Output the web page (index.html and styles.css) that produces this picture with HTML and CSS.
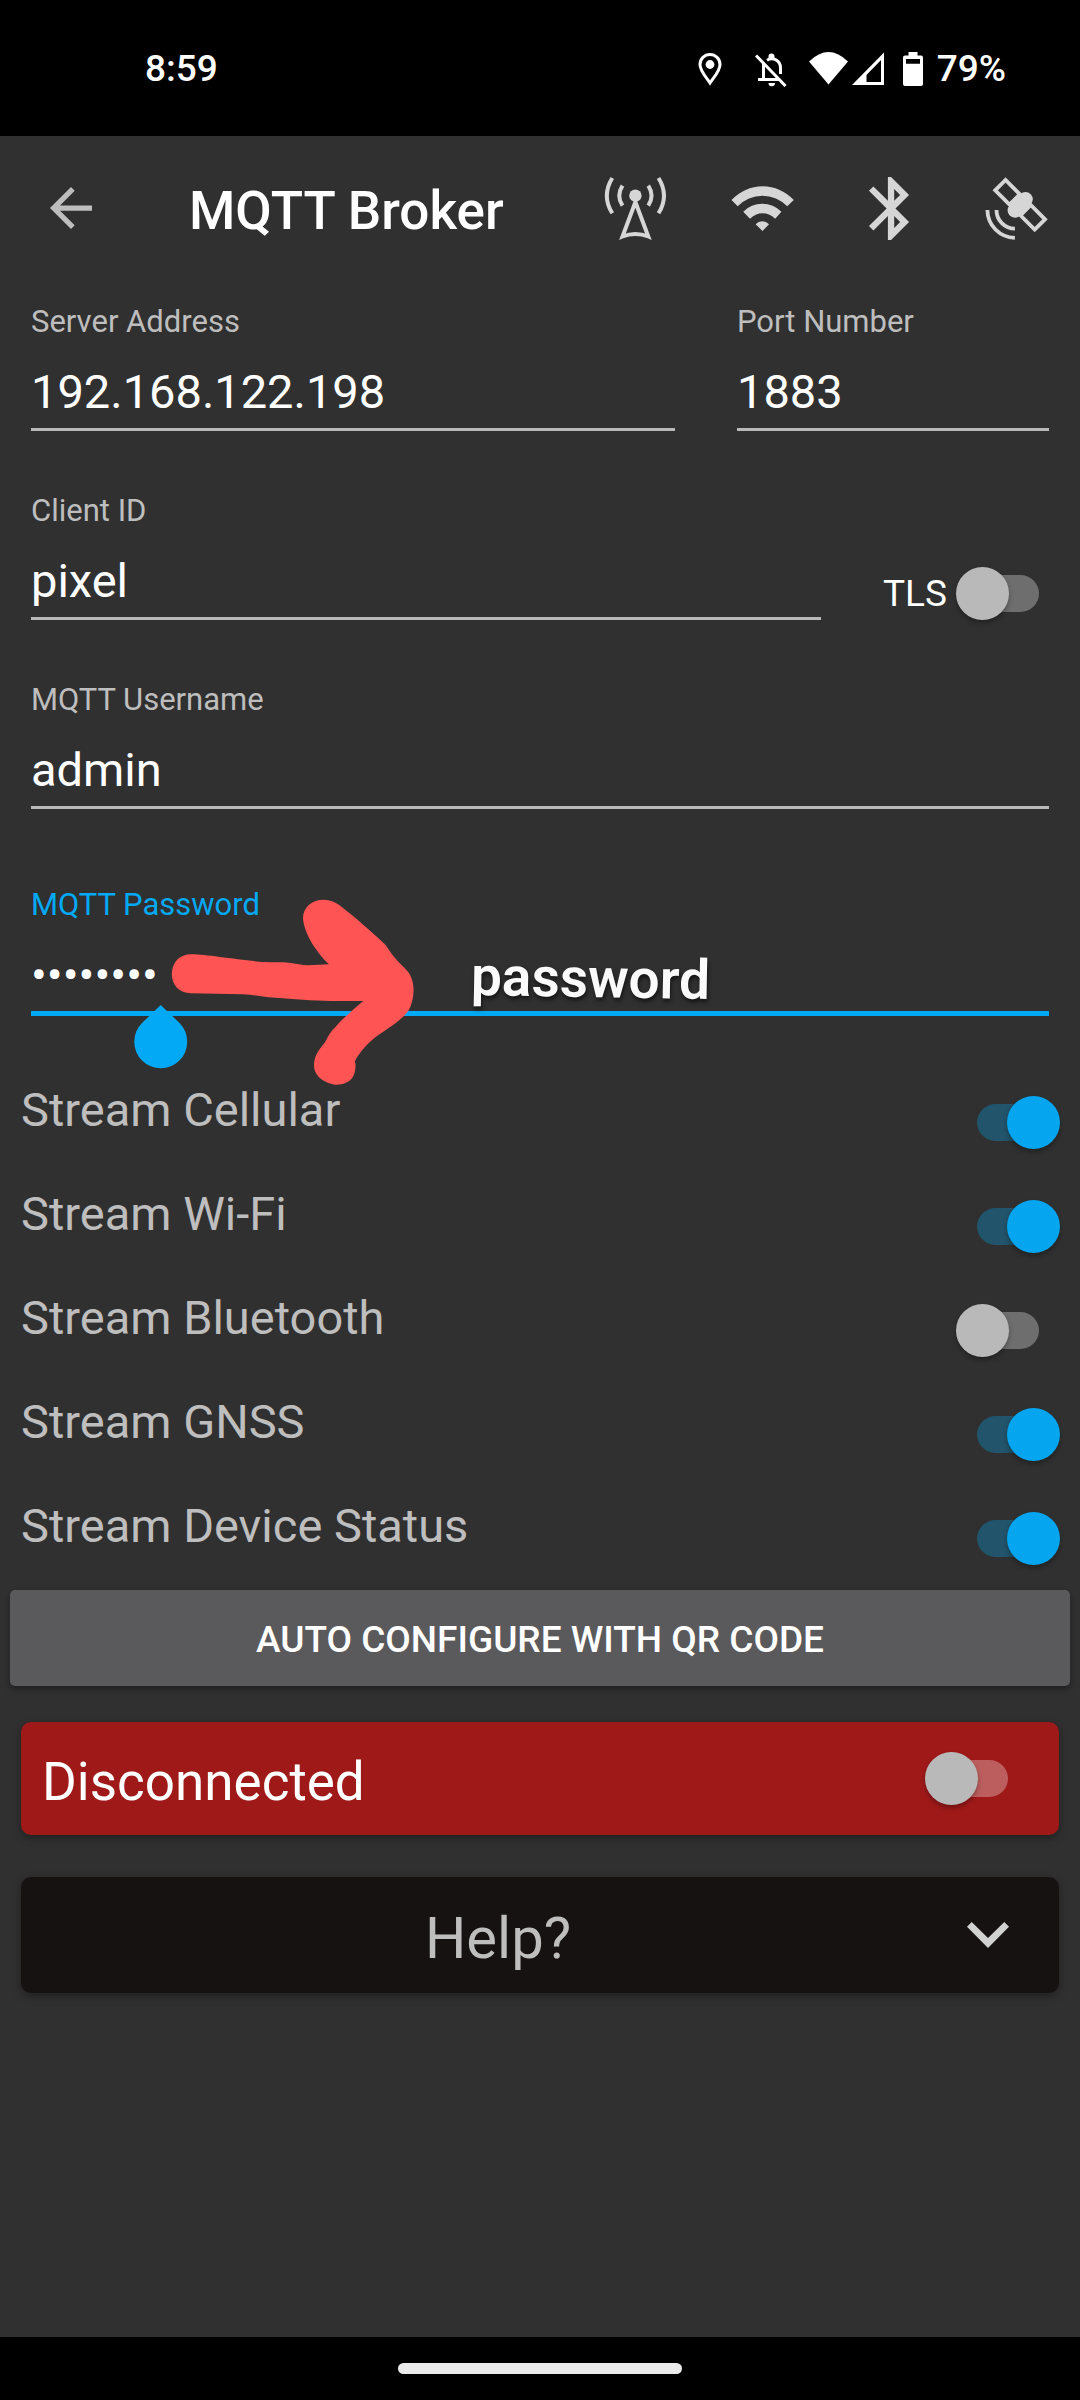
FILE: index.html
```html
<!DOCTYPE html>
<html lang="en">
<head>
<meta charset="utf-8">
<meta name="viewport" content="width=device-width, initial-scale=1">
<title>MQTT Broker</title>
<link rel="stylesheet" href="styles.css">
</head>
<body>
<div class="status-bar">
  <span class="clock">8:59</span>
  <svg class="status-pin" width="24" height="36" viewBox="0 0 24 36" aria-hidden="true"><path d="M12 32C8 26 2 20 2 13.500a10 10 0 0 1 20 0C22 20 16 26 12 32z" fill="none" stroke="#fff" stroke-width="3"/><circle cx="12" cy="13.500" r="4.400" fill="#fff"/></svg>
  <svg class="status-bell" width="32" height="36" viewBox="0 0 32 36" aria-hidden="true"><g fill="none" stroke="#fff" stroke-width="3"><path d="M1 4.500L30.500 35M8.500 13V28M3 28.500H24M12 9.300C18 5.500 25.500 9.500 25.500 17V23"/></g><path d="M13.500 8V5.500a3 3 0 0 1 6 0V8zM13.500 32h6.500a3.200 3.200 0 0 1-6.500 0z" fill="#fff"/></svg>
  <svg class="status-wifi" width="40" height="36" viewBox="0 0 40 36" aria-hidden="true"><path d="M19.500 33.500L0 10.500Q19.500-8.500 39 10.500z" fill="#fff"/></svg>
  <svg class="status-signal" width="32" height="36" viewBox="0 0 32 36" aria-hidden="true"><path fill-rule="evenodd" d="M0 34L32 1.500V34zM14.500 24V31H29V9z" fill="#fff"/></svg>
  <svg class="status-battery" width="20" height="36" viewBox="0 0 20 36" aria-hidden="true"><path fill-rule="evenodd" d="M5.500 1h9v3.500H18a2 2 0 0 1 2 2V33a2 2 0 0 1-2 2H2a2 2 0 0 1-2-2V6.500a2 2 0 0 1 2-2h3.500zM3 8v4.700h14V8z" fill="#fff"/></svg>
  <span>79%</span>
</div>

<header class="app-bar">
  <button class="back" type="button" aria-label="Back">
    <svg width="42" height="42" viewBox="4 4 16 16" aria-hidden="true"><path fill="#bebebe" d="M20 11H7.830l5.590-5.590L12 4l-8 8 8 8 1.410-1.410L7.830 13H20z"/></svg>
  </button>
  <h1 class="title caption">MQTT Broker</h1>
  <div class="indicators">
    <svg width="64" height="64" viewBox="0 0 64 64" role="img" aria-label="Cellular"><circle cx="32.400" cy="19.700" r="6.200" fill="#d6d6d6"/><g fill="none" stroke="#d6d6d6" stroke-width="4"><path d="M32.400 26L19.500 60.500Q32.400 55.500 45.300 60.500z"/><path d="M19.500 9.700Q13 19.700 19.500 29.700M45.300 9.700Q51.800 19.700 45.300 29.700M9.300 2Q-1.700 19.700 9.300 37.300M55.500 2Q66.500 19.700 55.500 37.300"/></g></svg>
    <svg width="64" height="64" viewBox="0 0 64 64" role="img" aria-label="Wi-Fi"><path fill="#d6d6d6" d="M1.500 24A42.300 42.300 0 0 1 63.800 24L57.200 30.300A34.200 34.200 0 0 0 7.700 30.300zM13.200 35.700A26.800 26.800 0 0 1 51.400 35.700L45.200 42.700A17.400 17.400 0 0 0 20 42.700zM25.600 48.300A9 9 0 0 1 39 48.300L32.500 55z"/></svg>
    <svg width="64" height="64" viewBox="1.200 1.700 20.300 20.300" role="img" aria-label="Bluetooth"><path fill="#d6d6d6" d="M17.710 7.710L12 2h-1v7.590L6.410 5 5 6.410 10.590 12 5 17.590 6.410 19 11 14.410V22h1l5.710-5.710-4.300-4.290 4.300-4.290zM13 5.830l1.880 1.880L13 9.590V5.830zm1.880 10.460L13 18.170v-3.760l1.880 1.880z"/></svg>
    <svg width="64" height="64" viewBox="0 0 64 64" role="img" aria-label="GNSS"><g fill="none" stroke="#d6d6d6" stroke-width="3.800"><path d="M21.500 4L11.200 14.300L25.500 28.600L35.800 18.300zM61 43.300L50.700 53.600L36.400 39.300L46.700 29z"/><path d="M3.400 34A28 28 0 0 0 30.900 61.800M12.500 34A18.500 18.500 0 0 0 30.900 52.700"/></g><g fill="#d6d6d6"><circle cx="41.500" cy="23.300" r="7.300"/><circle cx="30.900" cy="34.400" r="7.300"/><path d="M34 18.500L46.500 31L38 39.500L25.500 27z"/></g></svg>
  </div>
</header>

<main class="content">
  <form class="form">
    <div class="form-row">
      <div class="field field-grow">
        <label for="server">Server Address</label>
        <input id="server" type="text" value="192.168.122.198">
      </div>
      <div class="field field-port">
        <label for="port">Port Number</label>
        <input id="port" type="text" inputmode="numeric" value="1883">
      </div>
    </div>
    <div class="form-row form-row-switch">
      <div class="field field-grow">
        <label for="client">Client ID</label>
        <input id="client" type="text" value="pixel">
      </div>
      <label class="tls">TLS <input class="switch" type="checkbox" role="switch"></label>
    </div>
    <div class="form-row">
      <div class="field field-grow">
        <label for="username">MQTT Username</label>
        <input id="username" type="text" value="admin">
      </div>
    </div>
    <div class="form-row form-row-active">
      <div class="field field-grow field-active">
        <label for="password">MQTT Password</label>
        <input id="password" type="password" value="password">
        <svg class="handle" width="54" height="64" viewBox="0 0 54 64" aria-hidden="true"><path fill="#03a9f4" d="M26.700 0L45.500 18A26.500 26.500 0 1 1 8 18z"/></svg>
        <svg class="arrow" width="246" height="190" viewBox="0 0 246 190" aria-hidden="true"><path fill="#ff5454" d="M1.800 76C2 64 10 56.300 21 56.300C34 56 68 62 93.400 64C102 64.500 112 64 119.300 64.700C126 65.500 132 67.300 138.200 67.300L158.900 66.300C147 55 134 36 133 20.300C133 9 142 1.700 153.700 1.700C160 1.700 165 4 169.200 7C184 18 203 35 215.700 47C218 50 220 54 222.600 57C228 64 234 69 238 73.700C242 79 243.600 86 243.600 92C243.500 99 242 105 239.800 110.300C237 116 233 119 229.400 122C220 130 208 136 198.500 145.300C192 152 188 157 184.700 163.700C186 166 185.500 168 185.400 170.300C185 176 183 180 179.500 182.700C175 186 170 186.700 165.700 186.700C159 186 153 183 148.500 178.700C145 175 144 171 144 167C144 162 145.500 157 148.500 152.700C151 149 153 147 155.400 143.700C158 138 161 133 165.700 128.700C173 120 184 111 193.300 103L160.600 103L139.900 102.300L98.600 99.300C90 98 82 97 72.800 96.300L21 95.300C9 95 1.800 87 1.800 76z"/></svg>
        <span class="note">password</span>
      </div>
    </div>
  </form>

  <div class="streams">
    <label class="stream">Stream Cellular <input class="switch" type="checkbox" role="switch" checked></label>
    <label class="stream">Stream Wi-Fi <input class="switch" type="checkbox" role="switch" checked></label>
    <label class="stream">Stream Bluetooth <input class="switch" type="checkbox" role="switch"></label>
    <label class="stream">Stream GNSS <input class="switch" type="checkbox" role="switch" checked></label>
    <label class="stream">Stream Device Status <input class="switch" type="checkbox" role="switch" checked></label>
  </div>

  <button class="qr-button" type="button">AUTO CONFIGURE WITH QR CODE</button>

  <label class="card connection"><span class="caption">Disconnected</span> <input class="switch" type="checkbox" role="switch"></label>

  <button class="card help" type="button" aria-expanded="false">
    <span class="caption">Help?</span>
    <svg width="42" height="26" viewBox="0 0 42 26" aria-hidden="true"><path fill="#d2d2d2" d="M0 4.700L4.700 0L21 16L37.300 0L42 4.700L21 26z"/></svg>
  </button>
</main>

<footer class="nav-bar"><div class="nav-pill"></div></footer>
</body>
</html>
```
FILE: styles.css
```css
* {
  box-sizing: border-box;
}

body {
  margin: 0;
  min-height: 100vh;
  display: flex;
  flex-direction: column;
  background: #303030;
  color: #fff;
  font-family: Roboto, sans-serif;
}

button,
input {
  margin: 0;
  border: 0;
  padding: 0;
  background: none;
  color: inherit;
  font-family: inherit;
}

svg {
  display: block;
  flex: none;
}

/* System status bar */
.status-bar {
  display: flex;
  align-items: center;
  height: 136px;
  padding: 1px 74px 0 145px;
  background: #000;
  font-size: 37px;
  font-weight: 500;
}

.clock {
  margin-right: auto;
}

.status-pin {
  margin-right: 33px;
}

.status-bell {
  margin-right: 22px;
}

.status-wifi {
  margin-right: 3px;
}

.status-signal {
  margin-right: 19px;
}

.status-battery {
  margin-right: 14px;
}

/* App bar */
.app-bar {
  display: flex;
  align-items: center;
  height: 144px;
  padding: 0 32px 0 50px;
}

.title {
  flex: 1;
  margin: 0 0 0 97px;
  font-size: 53px;
  font-weight: 500;
  line-height: 60px;
}

.caption {
  padding-top: 6px;
}

.indicators {
  display: flex;
  gap: 63px;
}

.content {
  flex: 1;
  display: flex;
  flex-direction: column;
}

/* Connection form */
.form {
  display: flex;
  flex-direction: column;
  gap: 61px;
  padding-top: 23px;
}

.form-row {
  display: flex;
  align-items: flex-end;
  gap: 62px;
  padding: 0 31px;
}

.form-row-switch {
  padding-right: 20px;
}

.form-row-active {
  padding-top: 16px;
}

.field {
  position: relative;
  display: flex;
  flex-direction: column;
  min-width: 0;
}

.field-grow {
  flex: 1;
}

.field-port {
  flex: 0 0 312px;
}

.field label {
  color: #bebebe;
  font-size: 31px;
  line-height: 38px;
}

.field input {
  width: 100%;
  height: 90px;
  padding: 22px 0 9px;
  border-bottom: 3px solid #b9b9b9;
  outline: 0;
  font-size: 47px;
  line-height: 56px;
}

.field-active label {
  color: #03a9f4;
}

.field-active input {
  height: 92px;
  border-bottom: 5px solid #03a9f4;
}

.handle {
  position: absolute;
  left: 103px;
  top: 119px;
}

.arrow {
  position: absolute;
  left: 139px;
  top: 12px;
}

.note {
  position: absolute;
  left: 440px;
  top: 60px;
  color: #fafafa;
  font-size: 55px;
  font-weight: 600;
  line-height: 64px;
  text-shadow: 1px 3px 4px rgba(0, 0, 0, 0.6);
  transform: rotate(1deg);
}

.tls {
  display: flex;
  align-items: center;
  gap: 9px;
  font-size: 37px;
}

/* Toggle switch */
.switch {
  appearance: none;
  flex: none;
  display: grid;
  align-items: center;
  justify-items: center;
  width: 104px;
  height: 54px;
}

.switch::before,
.switch::after {
  content: "";
  grid-area: 1 / 1;
}

.switch::before {
  width: 62px;
  height: 37px;
  border-radius: 19px;
  background: rgba(255, 255, 255, 0.3);
}

.switch::after {
  justify-self: start;
  width: 53px;
  height: 53px;
  border-radius: 50%;
  background: #b9b9b9;
  box-shadow: 0 3px 5px rgba(0, 0, 0, 0.3);
}

.switch:checked::before {
  background: rgba(3, 169, 244, 0.3);
}

.switch:checked::after {
  justify-self: end;
  background: #05a5f0;
}

/* Stream toggles */
.streams {
  display: flex;
  flex-direction: column;
  margin-top: 54px;
}

.stream {
  display: flex;
  justify-content: space-between;
  height: 104px;
  padding: 12px 20px 0 21px;
  color: #bebebe;
  font-size: 47px;
  line-height: 56px;
}

.stream .switch {
  margin-top: 13px;
}

/* Actions */
.qr-button {
  height: 96px;
  margin: 0 10px;
  padding-top: 2px;
  border-radius: 5px;
  background: #5a595b;
  box-shadow: 0 3px 6px rgba(0, 0, 0, 0.35);
  font-size: 37px;
  font-weight: 500;
}

.card {
  display: flex;
  align-items: center;
  margin: 0 21px;
  border-radius: 10px;
  box-shadow: 0 3px 8px rgba(0, 0, 0, 0.35);
}

.connection {
  justify-content: space-between;
  height: 113px;
  margin-top: 36px;
  padding: 0 30px 0 21px;
  background: #a01919;
  font-size: 53px;
}

.help {
  height: 116px;
  margin-top: 42px;
  padding: 0 50px 0 8px;
  background: #161211;
  color: #bebebe;
  font-size: 58px;
}

.help .caption {
  flex: 1;
}

/* Gesture navigation */
.nav-bar {
  display: flex;
  align-items: center;
  justify-content: center;
  height: 63px;
  background: #000;
}

.nav-pill {
  width: 284px;
  height: 11px;
  border-radius: 6px;
  background: #ebebeb;
}
```
